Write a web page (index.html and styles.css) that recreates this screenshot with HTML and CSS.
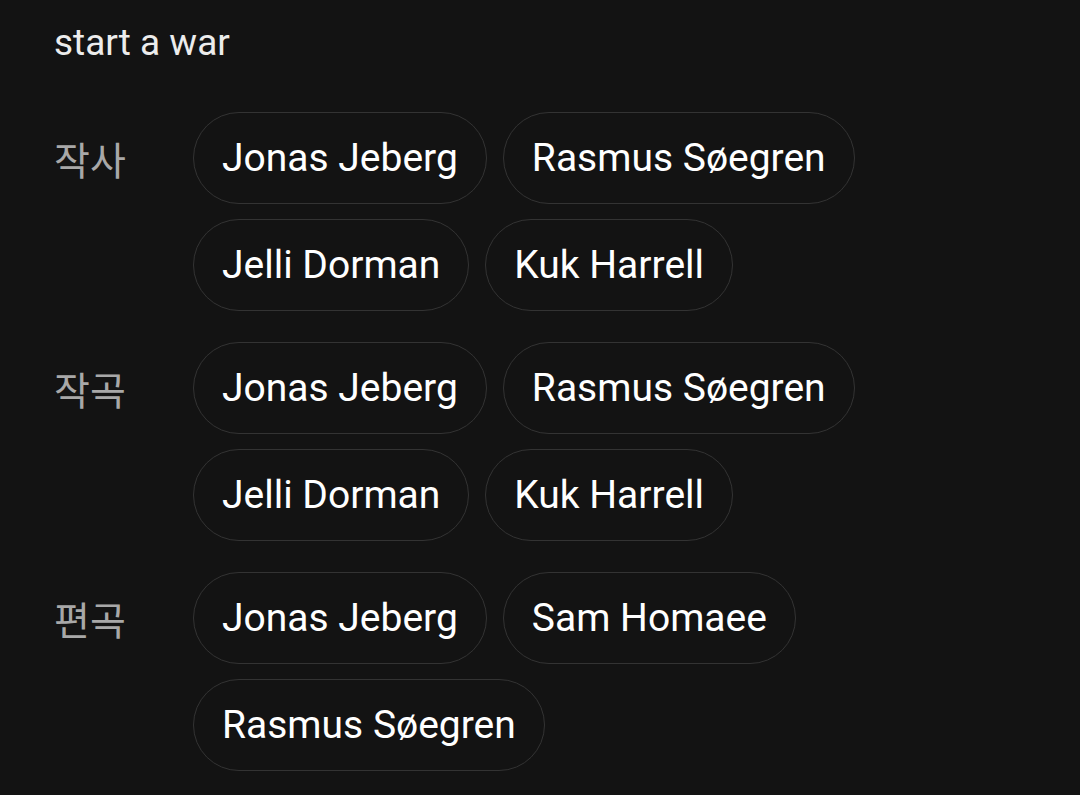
FILE: index.html
```html
<!DOCTYPE html>
<html lang="ko">
<head>
<meta charset="utf-8">
<title>Credits</title>
<link rel="stylesheet" href="styles.css">
</head>
<body>
<main class="page">
  <h1 class="title">start a war</h1>
  <section class="credits">
    <div class="group">
      <div class="role">작사</div>
      <div class="chips">
        <span class="chip">Jonas Jeberg</span>
        <span class="chip">Rasmus Søegren</span>
        <span class="chip">Jelli Dorman</span>
        <span class="chip">Kuk Harrell</span>
      </div>
    </div>
    <div class="group">
      <div class="role">작곡</div>
      <div class="chips">
        <span class="chip">Jonas Jeberg</span>
        <span class="chip">Rasmus Søegren</span>
        <span class="chip">Jelli Dorman</span>
        <span class="chip">Kuk Harrell</span>
      </div>
    </div>
    <div class="group">
      <div class="role">편곡</div>
      <div class="chips">
        <span class="chip">Jonas Jeberg</span>
        <span class="chip">Sam Homaee</span>
        <span class="chip">Rasmus Søegren</span>
      </div>
    </div>
  </section>
</main>
</body>
</html>
```
FILE: styles.css
```css
html, body {
  margin: 0;
  padding: 0;
  background: #131313;
  height: 100%;
}
body {
  font-family: Roboto, "Noto Sans CJK KR", sans-serif;
  color: #ffffff;
  overflow: hidden;
}
.page {
  padding: 22px 0 0 54px;
}
.title {
  margin: 0;
  font-size: 37px;
  font-weight: 400;
  line-height: 42px;
  color: #ececec;
}
.credits {
  margin-top: 48px;
  display: flex;
  flex-direction: column;
  gap: 31px;
}
.group {
  display: flex;
  align-items: flex-start;
}
.role {
  width: 139px;
  flex: none;
  height: 92px;
  display: flex;
  align-items: center;
  font-family: "Noto Sans CJK KR", Roboto, sans-serif;
  font-size: 39px;
  color: #a8a8a8;
}
.chips {
  display: flex;
  flex-wrap: wrap;
  gap: 15px 16px;
  max-width: 700px;
}
.chip {
  box-sizing: border-box;
  height: 92px;
  padding: 0 28px;
  border: 1px solid #333333;
  border-radius: 46px;
  display: inline-flex;
  align-items: center;
  font-size: 39px;
  color: #ffffff;
  white-space: nowrap;
}
```
